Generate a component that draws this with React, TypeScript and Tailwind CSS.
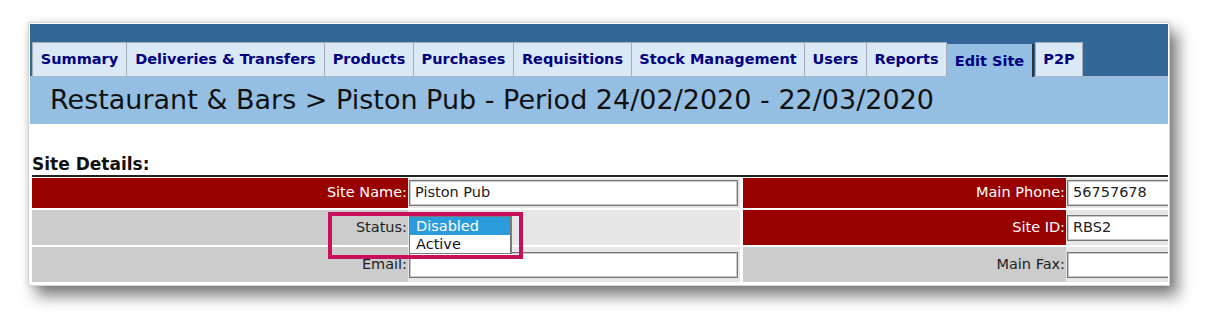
import React from "react";

const tabs = [
  { label: "Summary", w: "w-[95px]" },
  { label: "Deliveries & Transfers", w: "w-[199px]" },
  { label: "Products", w: "w-[90px]" },
  { label: "Purchases", w: "w-[101px]" },
  { label: "Requisitions", w: "w-[119px]" },
  { label: "Stock Management", w: "w-[174px]" },
  { label: "Users", w: "w-[63px]" },
  { label: "Reports", w: "w-[81px]" },
];

function Field({ value = "", wide = "w-[329px]" }: { value?: string; wide?: string }) {
  return (
    <div
      className={`${wide} shrink-0 h-[26px] ml-px border border-[#777] bg-white shadow-[inset_0_0_0_1px_#c8c8c8] pl-[5px] flex items-center text-[#222] whitespace-nowrap`}
    >
      {value}
    </div>
  );
}

export default function App() {
  return (
    <div className="w-[1212px] h-[328px] bg-white overflow-hidden font-['DejaVu_Sans',Verdana,sans-serif] text-[14.5px]">
      {/* Screenshot frame with drop shadow */}
      <div className="ml-[28px] mt-[22px] w-[1142px] h-[264px] border border-[#d6d6d6] bg-white p-px shadow-[8px_10px_14px_rgba(0,0,0,0.5),0_0_6px_rgba(0,0,0,0.12)]">
        <div className="w-full h-full overflow-hidden">
          {/* Top bar + tabs */}
          <div className="bg-[#336699] h-[52px] pl-[2px] flex items-end">
            {tabs.map((t, i) => (
              <div
                key={t.label}
                className={`${t.w} shrink-0 h-[34px] ${i === 0 ? "" : "-ml-px"} border border-b-0 border-[#a3adb8] bg-[#dbe8f5] text-[#000080] font-bold flex items-center justify-center whitespace-nowrap`}
              >
                {t.label}
              </div>
            ))}
            {/* Active tab */}
            <div className="w-[88px] shrink-0 h-[33px] -ml-px -mb-px relative z-10 border-l border-[#a3adb8] border-r-2 border-r-[#333] bg-[#95bfe2] text-[#000080] font-bold flex items-center justify-center pt-[3px] whitespace-nowrap">
              Edit Site
            </div>
            <div className="w-[48px] shrink-0 h-[34px] ml-[1px] border border-b-0 border-[#a3adb8] bg-[#dbe8f5] text-[#000080] font-bold flex items-center justify-center">
              P2P
            </div>
          </div>

          {/* Title bar */}
          <div className="h-[48px] border-t border-[#aab6c2] bg-[#95bfe2] pl-[20px] flex items-center text-[27px] text-[#111] whitespace-nowrap">
            Restaurant &amp; Bars &gt; Piston Pub - Period 24/02/2020 - 22/03/2020
          </div>

          {/* Section heading */}
          <div className="h-[51px] pl-[2px] flex items-end pb-[1px]">
            <span className="text-[17px] font-bold text-[#111] leading-[20px]">Site Details:</span>
          </div>
          <div className="ml-[2px] border-t-2 border-[#222]" />

          {/* Detail tables */}
          <div className="pl-[2px] pt-px flex gap-[3px]">
            {/* Left table */}
            <div className="relative w-[708px] shrink-0 flex flex-col gap-[2px]">
              <div className="h-[30px] flex">
                <div className="w-[376px] shrink-0 bg-[#990000] text-white flex items-center justify-end pr-px">Site Name:</div>
                <div className="flex-1 bg-[#e6e6e6] flex items-center">
                  <Field value="Piston Pub" />
                </div>
              </div>
              <div className="h-[35px] flex">
                <div className="w-[376px] shrink-0 bg-[#cccccc] text-[#222] flex items-center justify-end pr-px">Status:</div>
                <div className="relative flex-1 bg-[#e6e6e6]">
                  <div className="absolute left-px top-[6px] z-10 w-[103px] h-[38px] border border-[#7a7a7a] border-r-2 bg-white">
                    <div className="h-[18px] bg-[#2b9bdb] text-white pl-[6px] leading-[18px]">Disabled</div>
                    <div className="h-[18px] text-[#111] pl-[6px] leading-[18px]">Active</div>
                  </div>
                </div>
              </div>
              <div className="h-[35px] flex">
                <div className="w-[376px] shrink-0 bg-[#cccccc] text-[#222] flex items-center justify-end pr-px">Email:</div>
                <div className="flex-1 bg-[#e6e6e6] flex items-center">
                  <Field />
                </div>
              </div>
              <div className="h-[30px] flex">
                <div className="w-[376px] shrink-0 bg-[#cccccc]" />
                <div className="flex-1 bg-[#e6e6e6]" />
              </div>
              {/* Highlight box */}
              <div className="absolute left-[296px] top-[34px] w-[195px] h-[47px] border-4 border-[#c8105a] z-20" />
            </div>

            {/* Right table */}
            <div className="flex-1 min-w-0 overflow-hidden flex flex-col gap-[2px]">
              <div className="h-[30px] flex">
                <div className="w-[323px] shrink-0 bg-[#990000] text-white flex items-center justify-end pr-px">Main Phone:</div>
                <div className="flex-1 bg-[#e6e6e6] flex items-center">
                  <Field value="56757678" wide="w-[200px]" />
                </div>
              </div>
              <div className="h-[35px] flex">
                <div className="w-[323px] shrink-0 bg-[#990000] text-white flex items-center justify-end pr-px">Site ID:</div>
                <div className="flex-1 bg-[#e6e6e6] flex items-center">
                  <Field value="RBS2" wide="w-[200px]" />
                </div>
              </div>
              <div className="h-[35px] flex">
                <div className="w-[323px] shrink-0 bg-[#cccccc] text-[#222] flex items-center justify-end pr-px">Main Fax:</div>
                <div className="flex-1 bg-[#e6e6e6] flex items-center">
                  <Field wide="w-[200px]" />
                </div>
              </div>
              <div className="h-[30px] flex">
                <div className="w-[323px] shrink-0 bg-[#cccccc]" />
                <div className="flex-1 bg-[#e6e6e6]" />
              </div>
            </div>
          </div>
        </div>
      </div>
    </div>
  );
}
